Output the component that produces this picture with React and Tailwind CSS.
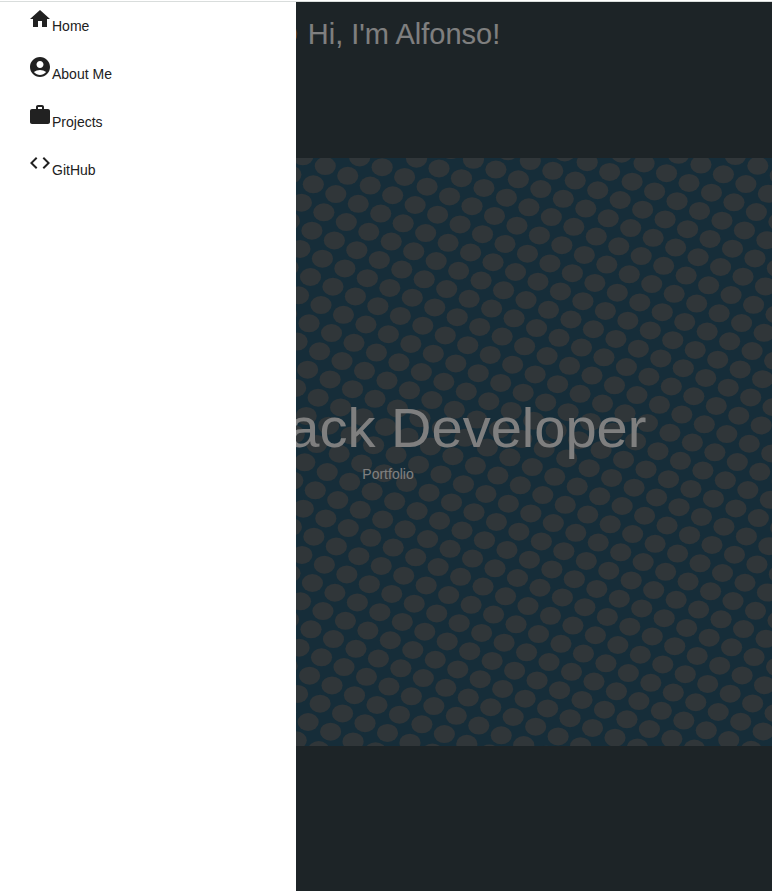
import { MdHome, MdAccountCircle, MdWork, MdCode } from "react-icons/md";

const links = [
  { label: "Home", Icon: MdHome },
  { label: "About Me", Icon: MdAccountCircle },
  { label: "Projects", Icon: MdWork },
  { label: "GitHub", Icon: MdCode },
];

const WIDTH = 772;
const HEIGHT = 588;

// Slanted lattice of dots, spanned by two step vectors.
const dots = [];
for (let m = -50; m <= 50; m++) {
  for (let n = -50; n <= 50; n++) {
    const x = 313.33 + m * 22.465 + n * 10.519;
    const y = 26.33 + m * 9.74 + n * 28.035;
    if (x > -12 && x < WIDTH + 12 && y > -12 && y < HEIGHT + 12) {
      dots.push({ id: `${m}:${n}`, x, y });
    }
  }
}

function DotPattern() {
  return (
    <svg
      aria-hidden="true"
      className="absolute inset-0 h-full w-full"
      viewBox={`0 0 ${WIDTH} ${HEIGHT}`}
      preserveAspectRatio="xMidYMid slice"
    >
      <g fill="#606c72">
        {dots.map((d) => (
          <ellipse key={d.id} cx={d.x} cy={d.y} rx="10.6" ry="9" />
        ))}
      </g>
    </svg>
  );
}

function Wave() {
  return (
    <svg aria-hidden="true" viewBox="0 0 24 24" className="h-7 w-7" fill="none" stroke="#c07838" strokeWidth="3" strokeLinecap="round">
      <path d="M4 9l7 8M7 5l7 9M11 4l6 8M19.500 8c1.500 3 1 8 -4 11s-7 1-10-3" />
    </svg>
  );
}

export default function App() {
  return (
    <div className="min-h-screen border-t border-white bg-[#3a484e] font-['Liberation_Sans',Arial,sans-serif] text-white">
      <header className="flex h-[157px] justify-center border-t border-[#d9dddc] pt-[13px]">
        <h1 className="flex h-10 items-center gap-2 text-[29px]">
          <Wave />
          Hi, I'm Alfonso!
        </h1>
      </header>

      <main className="relative flex h-[588px] flex-col items-center justify-center bg-[#2c5a72] pb-6 pl-1">
        <DotPattern />
        <h2 className="relative whitespace-nowrap text-[56px] leading-16">Full Stack Developer</h2>
        <p className="relative mt-1 text-sm">Portfolio</p>
      </main>

      <div className="fixed inset-x-0 top-0.5 bottom-0 bg-black/50" />

      <nav className="fixed top-0.5 bottom-0 left-0 w-74 bg-white pl-7 text-sm text-[#212121]">
        <ul>
          {links.map(({ label, Icon }) => (
            <li key={label} className="h-12 pt-[5px]">
              <a href="#" className="flex items-start">
                <Icon className="size-6" />
                <span className="pt-[9px]">{label}</span>
              </a>
            </li>
          ))}
        </ul>
      </nav>
    </div>
  );
}
